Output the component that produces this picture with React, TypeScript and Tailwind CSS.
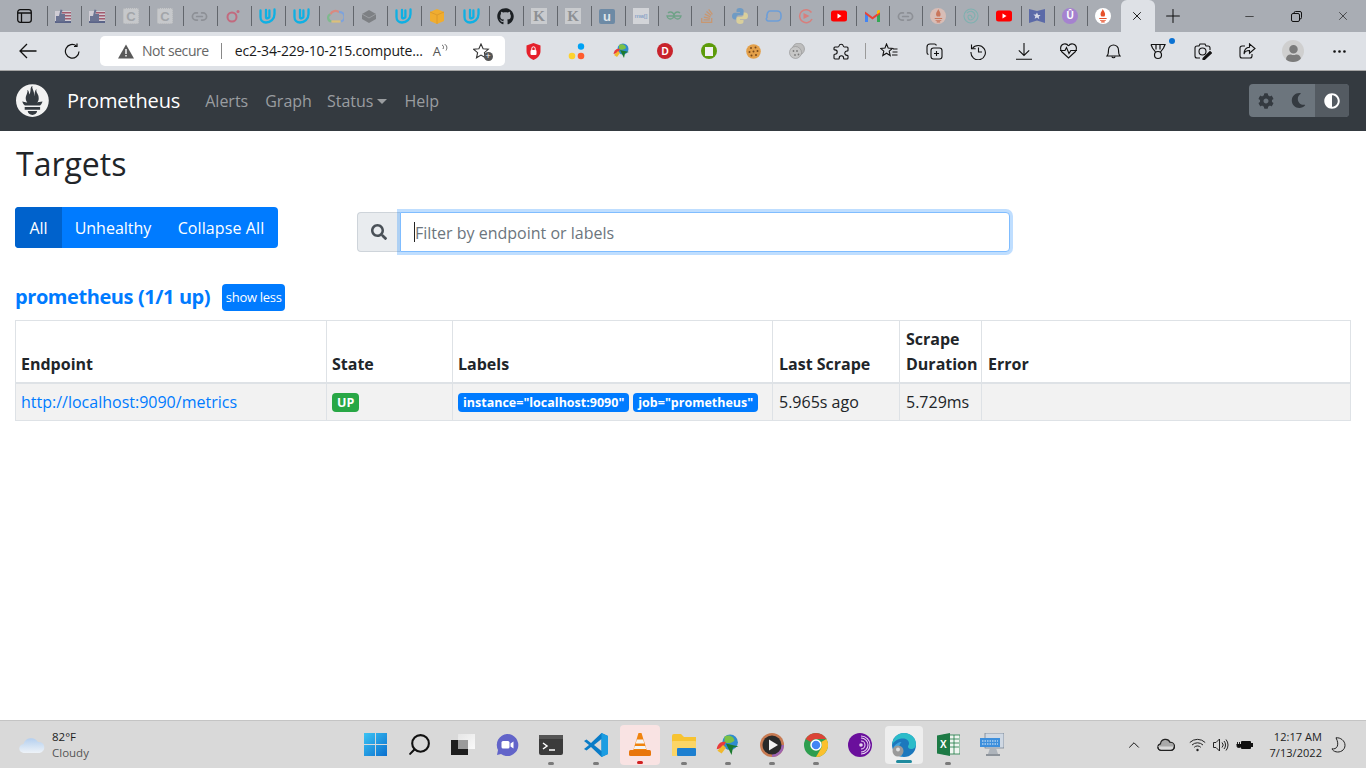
import React from "react";
import { FaSearch, FaCog, FaMoon, FaAdjust, FaGithub, FaStackOverflow, FaUser } from "react-icons/fa";
import { X, Plus, Minus, ChevronUp, Search, Link2, MoreHorizontal } from "lucide-react";

const flame = "M56.667.667C25.372.667 0 26.036 0 57.332c0 31.295 25.372 56.666 56.667 56.666s56.666-25.371 56.666-56.666C113.333 26.036 87.961.667 56.667.667zm0 106.055c-8.904 0-16.123-5.948-16.123-13.283H72.79c0 7.334-7.219 13.283-16.123 13.283zM83.297 89.04H30.034v-9.658h53.264v9.658zm-.191-14.629H30.195c-.176-.203-.356-.403-.526-.609-5.452-6.62-6.736-10.076-7.983-13.598-.021-.116 6.611 1.355 11.314 2.413 0 0 2.42.56 5.958 1.205-3.397-3.982-5.414-9.044-5.414-14.218 0-11.359 8.712-21.285 5.569-29.308 3.059.249 6.331 6.456 6.552 16.161 3.252-4.494 4.613-12.701 4.613-17.733 0-5.21 3.433-11.262 6.867-11.469-3.061 5.045.793 9.37 4.219 20.099 1.285 4.03 1.121 10.812 2.113 15.113.329-8.933 1.865-21.967 7.532-26.467-2.5 5.667.37 12.758 2.333 16.167 3.167 5.5 5.087 9.667 5.087 17.548 0 5.284-1.951 10.259-5.242 14.148 3.742-.702 6.326-1.335 6.326-1.335l12.152-2.371c.001-.001-1.765 7.261-8.558 14.254z";

const PromLogo = ({ size, color }: { size: number; color: string }) => (
  <svg width={size} height={size} viewBox="0 0 114 114"><path d={flame} fill={color} /></svg>
);

const Udacity = () => (
  <svg width="17" height="16" viewBox="0 0 17 16" fill="none" stroke="#0fb0e3" strokeWidth="2.300" strokeLinecap="round">
    <path d="M1.500 2.500v6.500c0 3.200 2.200 5.500 5.500 5.500 4.500 0 8.500-3.500 8.500-8.500V1.500" />
    <path d="M7 2v7.500c0 1.200 2.800 1 3.400-.5V2.500" />
  </svg>
);
const Flag = () => (
  <svg width="16" height="14" viewBox="0 0 16 14">
    <rect x="0" y="2" width="16" height="12" fill="#cfccd4" />
    <rect x="7" y="3" width="9" height="1.500" fill="#a25b6e" />
    <rect x="7" y="6" width="9" height="1.500" fill="#a25b6e" />
    <rect x="7" y="9" width="9" height="1.500" fill="#a25b6e" />
    <rect x="0" y="12" width="16" height="2" fill="#5b6488" />
    <path d="M1 7h3l1.500-6.500 2 .5-1 4h3.500v7.500H1z" fill="#6b7392" />
  </svg>
);
const CBox = () => (
  <div className="w-[16px] h-[16px] rounded-[2px] bg-[#c6c8cb] border border-dotted border-[#b3b5b8] flex items-center justify-center text-[13px] font-bold text-[#a2a5a9] leading-none" style={{ fontFamily: "Liberation Sans" }}>C</div>
);
const KBox = () => (
  <div className="w-[16px] h-[16px] bg-[#c9cbce] flex items-center justify-center text-[15px] font-bold text-[#8d9094] leading-none" style={{ fontFamily: "Liberation Serif" }}>K</div>
);
const LinkF = () => <Link2 size={17} color="#8d9096" strokeWidth={2.4} />;
const Yt = ({ w = 16 }: { w?: number }) => (
  <svg width={w} height="12" viewBox="0 0 16 12">
    <rect width="16" height="11" y=".5" rx="2.500" fill="#f00" />
    <path d="M6.500 3.500v5l4-2.500z" fill="#fff" />
  </svg>
);

const favicons: React.ReactNode[] = [
  <Flag />, <Flag />, <CBox />, <CBox />, <LinkF />,
  <svg width="16" height="16" viewBox="0 0 16 16" fill="none"><circle cx="7" cy="9" r="4.500" stroke="#c26a7e" strokeWidth="2" /><circle cx="13" cy="3.500" r="1.500" fill="#c26a7e" /></svg>,
  <Udacity />, <Udacity />,
  <svg width="17" height="14" viewBox="0 0 17 14" fill="none" strokeWidth="2.200"><path d="M4.500 12.500a3.800 3.800 0 0 1-1-7.300" stroke="#7fb98e" /><path d="M3.500 5.200A5.500 5.500 0 0 1 12 3.200" stroke="#d98a80" /><path d="M12 3.200a4.500 4.500 0 0 1 1.500 9.300" stroke="#7ea3dc" /><path d="M4.500 12.500h9" stroke="#dcc07a" /></svg>,
  <svg width="16" height="14" viewBox="0 0 16 14"><path d="M1 5l7-4 7 4v5l-7 4-7-4z" fill="#7d8084" /><path d="M1 5l7 4 7-4" stroke="#9b9ea2" fill="none" /></svg>,
  <Udacity />,
  <svg width="16" height="16" viewBox="0 0 16 16"><path d="M1 4l7-3 7 3v9l-7 3-7-3z" fill="#f0ad2f" /><path d="M1 4l7 3 7-3M8 7v9" stroke="#d8962a" fill="none" strokeWidth=".8" /></svg>,
  <Udacity />,
  <FaGithub size={17} color="#1b1f23" />,
  <KBox />, <KBox />,
  <div className="w-[16px] h-[15px] rounded-[2px] bg-[#6d8aa5] flex items-center justify-center text-[13px] font-bold text-[#dfe3e8] leading-none" style={{ fontFamily: "Liberation Sans" }}>u</div>,
  <div className="w-[16px] h-[16px] bg-[#d2d4d8] flex items-center justify-center text-[6px] text-[#6d8fc0] leading-none whitespace-nowrap" style={{ fontFamily: "Liberation Sans" }}>mw[]</div>,
  <svg width="16" height="10" viewBox="0 0 16 10" fill="none" stroke="#6fa287" strokeWidth="1.300"><path d="M8 5h7a3.500 3.500 0 1 1-1-3M8 5H1a3.500 3.500 0 1 0 1-3" /></svg>,
  <span className="opacity-50 flex"><FaStackOverflow size={16} color="#e8822f" /></span>,
  <svg width="16" height="16" viewBox="0 0 16 16"><path d="M8 0C5 0 4.500 1 4.500 2.500V4H8v.7H3C1 4.700 0 6 0 8s1 3.500 3 3.500h1.300V9.500c0-1.200 1-2.300 2.300-2.300h3c1.200 0 2-1 2-2V2.500C11.500 1 10 0 8 0z" fill="#6f9bc4" /><path d="M8 16c3 0 3.500-1 3.500-2.500V12H8v-.7h5c2 0 3-1.300 3-3.300s-1-3.500-3-3.500h-1.300v2c0 1.200-1 2.300-2.300 2.300h-3c-1.200 0-2 1-2 2v2.700C4.500 15 6 16 8 16z" fill="#d9cf9c" /></svg>,
  <svg width="17" height="14" viewBox="0 0 17 14" fill="none" stroke="#6d9ed8" strokeWidth="1.600"><path d="M5 2h7a4 4 0 0 1 4 4v2a4 4 0 0 1-4 4H3a2 2 0 0 1-1-3.500C1.500 5 3 2 5 2z" /></svg>,
  <svg width="16" height="16" viewBox="0 0 16 16" fill="none" stroke="#d87f7c" strokeWidth="1.500"><path d="M13.500 4.500A6.500 6.500 0 1 0 14 11" /><path d="M5.500 5l6 3-6 3z" fill="#d87f7c" stroke="none" /></svg>,
  <Yt />,
  <svg width="15" height="12" viewBox="0 0 15 12"><path d="M0 2.500V12h3V4.500z" fill="#4285f4" /><path d="M15 2.500V12h-3V4.500z" fill="#34a853" /><path d="M0 1.500L7.500 7 15 1.500V4L7.500 9.500 0 4z" fill="#ea4335" /><path d="M12 4.500L15 2.300V1c0-1-1.200-1.300-2-.7L12 1z" fill="#fbbc04" /></svg>,
  <LinkF />,
  <div className="w-[16px] h-[16px] rounded-full bg-[#d8bdb6] flex items-center justify-center"><svg width="11" height="14" viewBox="20 6 74 100"><path d="M56 6c2 10 10 16 14 28 3 10 2 18-3 26H46c-6-8-8-16-5-26 3-8 9-14 15-28z M30 70h53v7H30z M36 84h41v6H36z M44 94h25v8H44z" fill="#c9765c" /></svg></div>,
  <svg width="16" height="16" viewBox="0 0 16 16" fill="none" stroke="#7eb1b0" strokeWidth="1.100"><circle cx="8" cy="8" r="7" /><path d="M4 5c3-3 7-2 8 2 0 3-3 5-5 5-2-1-3-4-1-5 2 0 3 1 3 3" /></svg>,
  <Yt />,
  <svg width="16" height="16" viewBox="0 0 16 16"><path d="M0 1l8 2 8-2v14l-8-2.500L0 15z" fill="#5b6aa8" /><path d="M8 4.500l1.100 2.400 2.500.2-1.900 1.700.6 2.500L8 9.500l-2.300 1.300.6-2.500-1.900-1.700 2.500-.2z" fill="#d6d9e6" /></svg>,
  <div className="w-[16px] h-[16px] rounded-full bg-[#a582cf] flex items-center justify-center text-[10px] font-bold text-white leading-none" style={{ fontFamily: "Liberation Sans" }}>Û</div>,
  <div className="w-[16px] h-[16px] rounded-full bg-white flex items-center justify-center"><svg width="12" height="14" viewBox="20 6 74 100"><path d="M56 6c2 10 10 16 14 28 3 10 2 18-3 26H46c-6-8-8-16-5-26 3-8 9-14 15-28z M30 70h53v7H30z M36 84h41v6H36z M44 94h25v8H44z" fill="#e6522c" /></svg></div>,
];

const Tab = ({ children, wide }: { children: React.ReactNode; wide: boolean }) => (
  <div className={`${wide ? "w-[34px] pr-[3px]" : "w-[33px] pr-[2px]"} h-[20px] shrink-0 border-l border-[#62666c] flex items-center justify-center`}>{children}</div>
);

const Slot = ({ children, w = "w-[44.8px]" }: { children: React.ReactNode; w?: string }) => (
  <div className={`${w} shrink-0 flex items-center justify-center`}>{children}</div>
);

const TabBar = () => (
  <div className="h-[32px] bg-[#a9adb4] flex items-center shrink-0">
    <div className="w-[47px] flex justify-center pl-[1px]">
      <svg width="15" height="14" viewBox="0 0 15 14" fill="none" stroke="#111" strokeWidth="1.300"><rect x=".7" y=".7" width="13.600" height="12.600" rx="2.500" /><path d="M1 4h13M4.500 4v9" /></svg>
    </div>
    {favicons.map((f, i) => <Tab key={i} wide={i < 17}>{f}</Tab>)}
    <div className="w-[34px] h-[32px] bg-[#dee1e6] rounded-t-[6px] flex items-center justify-center pr-[3px] ml-[1px]">
      <X size={14} color="#111" strokeWidth={1.600} />
    </div>
    <div className="w-[36px] flex justify-center"><Plus size={22} color="#111" strokeWidth={1.100} /></div>
    <div className="flex-1" />
    <div className="w-[47px] flex justify-center"><Minus size={13} color="#111" strokeWidth={1.200} /></div>
    <div className="w-[47px] flex justify-center">
      <svg width="11" height="11" viewBox="0 0 11 11" fill="none" stroke="#111"><rect x=".5" y="2.500" width="8" height="8" rx="1.500" /><path d="M3 2.500V2a1.500 1.500 0 0 1 1.500-1.500H9A1.500 1.500 0 0 1 10.500 2v4.500A1.500 1.500 0 0 1 9 8h-.500" /></svg>
    </div>
    <div className="w-[46px] flex justify-center"><X size={14} color="#111" strokeWidth={1.100} /></div>
  </div>
);

const stroke = { fill: "none", stroke: "#111", strokeWidth: 1.100 };

const Toolbar = () => (
  <div className="h-[38px] bg-[#dee1e6] flex items-center shrink-0">
    <div className="w-[56px] flex justify-center">
      <svg width="18" height="16" viewBox="0 0 18 16" {...stroke} strokeWidth={1.300}><path d="M17.500 8H1M8 1L1 8l7 7" /></svg>
    </div>
    <div className="w-[32px] flex justify-center">
      <svg width="17" height="17" viewBox="0 0 17 17" {...stroke} strokeWidth={1.200}><path d="M15 8.500A6.800 6.800 0 1 1 12.500 3" /><path d="M13 .5V3.500H10" /></svg>
    </div>
    <div className="w-[405px] h-[30px] ml-[12px] bg-white rounded-[5px] flex items-center pl-[18px] text-[14px] shrink-0">
      <svg width="16" height="15" viewBox="0 0 16 15" className="shrink-0"><path d="M8 .5L16 14.500H0z" fill="#595959" /><rect x="7.300" y="5" width="1.400" height="5" fill="#fff" /><rect x="7.300" y="11" width="1.400" height="1.500" fill="#fff" /></svg>
      <span className="ml-[8px] text-[#666] tracking-[-0.42px] whitespace-nowrap -mt-[1px]">Not secure</span>
      <span className="w-px h-[16px] bg-[#888] ml-[12px]" />
      <span className="ml-[13px] text-[#1a1a1a] tracking-[-0.2px] whitespace-nowrap -mt-[1px]">ec2-34-229-10-215.compute...</span>
      <span className="ml-[10px] w-[18px] flex items-center text-[#555] text-[13px] leading-none shrink-0">
        A
        <svg width="7" height="10" viewBox="0 0 7 10" fill="none" stroke="#555" strokeWidth=".9" className="mb-[5px]"><path d="M1 1c1.500.5 2 2 1 4M3.500 0c2.500 1.500 3 4 1.500 6.500" /></svg>
      </span>
      <span className="relative ml-[22px] flex">
        <svg width="17" height="16" viewBox="0 0 17 16" {...stroke} stroke="#333"><path d="M8 1l2.100 4.800 5.200.5-3.900 3.400 1.100 5.100L8 12.100 3.500 14.800l1.100-5.100L.7 6.300l5.200-.5z" /></svg>
        <span className="absolute right-[-3px] bottom-[-2px] w-[9px] h-[9px] rounded-full bg-[#555] text-white text-[9px] leading-[8px] text-center">+</span>
      </span>
    </div>
    <div className="w-[6px]" />
    <Slot w="w-[44px]">
      <svg width="15" height="17" viewBox="0 0 15 17"><path d="M7.500 0l7 2.500V8c0 4-3 7.500-7 9-4-1.500-7-5-7-9V2.500z" fill="#e5202b" /><rect x="4.500" y="7" width="6" height="5" rx="1" fill="#fff" /><path d="M5.800 7V5.500a1.700 1.700 0 0 1 3.400 0V7" fill="none" stroke="#fff" /></svg>
    </Slot>
    <Slot w="w-[44px]">
      <svg width="18" height="17" viewBox="0 0 18 17"><circle cx="13" cy="3.500" r="3.200" fill="#00a2f4" /><circle cx="4" cy="13" r="3.300" fill="#fdd22e" /><circle cx="13" cy="13" r="3.300" fill="#ff5b2e" /></svg>
    </Slot>
    <Slot w="w-[44px]">
      <svg width="17" height="16" viewBox="0 0 17 16"><circle cx="10" cy="6" r="5.500" fill="#2f8ccf" /><path d="M6 2c3-2 7 0 7 3-2 2-5 2-7 1z" fill="#7cc144" /><path d="M.5 11C1 7 4 5 7 6L5 10z" fill="#e83b3b" /><path d="M1 12l4-4 2 2-3 4z" fill="#f1b92d" /><path d="M7 7l9 2-4 1-1 5z" fill="#1c7a2e" /></svg>
    </Slot>
    <Slot w="w-[44px]">
      <div className="w-[16px] h-[16px] rounded-full bg-[#c8232c] text-white text-[10px] font-bold flex items-center justify-center" style={{ fontFamily: "Liberation Sans" }}>D</div>
    </Slot>
    <Slot w="w-[44px]">
      <div className="w-[16px] h-[16px] rounded-full bg-[#5d9b0a] flex items-center justify-center"><div className="w-[8px] h-[9px] bg-[#f0f0f0]" /></div>
    </Slot>
    <Slot w="w-[44px]">
      <svg width="15" height="15" viewBox="0 0 15 15"><circle cx="7.500" cy="7.500" r="7.300" fill="#e3a04a" /><g fill="#7a4a1c"><circle cx="5" cy="4" r="1" /><circle cx="9.500" cy="3.500" r="1" /><circle cx="3.500" cy="8" r="1" /><circle cx="7.500" cy="7.500" r="1" /><circle cx="11.500" cy="7" r="1" /><circle cx="5.500" cy="11.500" r="1" /><circle cx="10" cy="11" r="1" /></g></svg>
    </Slot>
    <Slot w="w-[44px]">
      <svg width="16" height="16" viewBox="0 0 16 16"><circle cx="9.500" cy="6" r="6" fill="#bdbdbd" stroke="#8f8f8f" strokeWidth=".6" /><circle cx="6.500" cy="9.500" r="6" fill="#c6c6c6" stroke="#8f8f8f" strokeWidth=".6" /><g fill="#7c7c7c"><circle cx="4.500" cy="8" r=".9" /><circle cx="8" cy="8" r=".9" /><circle cx="6" cy="12" r=".9" /><circle cx="9.500" cy="11.500" r=".9" /></g></svg>
    </Slot>
    <Slot w="w-[44px]">
      <svg width="16" height="17" viewBox="0 0 16 17" {...stroke}><path d="M6 3a2.200 2.200 0 0 1 4.300 0c.1.700.6 1 1.200 1h2.500a1 1 0 0 1 1 1v2.300c0 .6-.5.8-1 .7a2.200 2.200 0 1 0 0 4.400c.5-.1 1 .1 1 .7V15a1 1 0 0 1-1 1h-2.700c-.6 0-.8-.5-.7-1a2.200 2.200 0 1 0-4.400 0c.1.500-.1 1-.7 1H2a1 1 0 0 1-1-1v-3c0-.6.500-.8 1-.7a2.200 2.200 0 1 0 0-4.400c-.5.100-1-.1-1-.7V5a1 1 0 0 1 1-1h3c.5 0 .9-.4 1-1z" /></svg>
    </Slot>
    <div className="w-px h-[16px] bg-[#9a9a9a] ml-[2px] mr-[1px]" />
    <Slot>
      <svg width="18" height="17" viewBox="0 0 18 17" {...stroke}><path d="M6.500 1l1.700 4 4.300.4-3.300 2.800 1 4.300-3.700-2.300L2.800 12.500l1-4.300L.6 5.400 5 5zM13 6h4.500M12.500 9h5M12 12h5.500" /></svg>
    </Slot>
    <Slot>
      <svg width="17" height="17" viewBox="0 0 17 17" {...stroke}><path d="M2.500 11.500A2 2 0 0 1 1 9.500V4a3 3 0 0 1 3-3h4.500a2 2 0 0 1 1.900 1.500" /><rect x="5" y="5" width="11" height="11" rx="2.500" /><path d="M10.500 8v5M8 10.500h5" /></svg>
    </Slot>
    <Slot>
      <svg width="17" height="17" viewBox="0 0 17 17" {...stroke}><path d="M2.300 5.500A7.200 7.200 0 1 1 1 9" /><path d="M1.500 1.500v4.200h4.200" /><path d="M8.500 4.500v4.500h3.500" /></svg>
    </Slot>
    <Slot>
      <svg width="16" height="17" viewBox="0 0 16 17" {...stroke}><path d="M8 0v12.500M2.800 7.300L8 12.500l5.200-5.200M0 16.300h16" /></svg>
    </Slot>
    <Slot>
      <svg width="17" height="16" viewBox="0 0 17 16" {...stroke}><path d="M8.500 3C6.500-.5 .8.500.6 5c-.1 1.500.4 2.500 1 3.500M8.500 3c2-3.500 7.700-2.500 7.900 2 .1 1.500-.4 2.500-1 3.500M1.500 8.500L8.500 15l7-6.500" /><path d="M0 7.500h5l1.500-3 2.500 6 1.800-3H17" /></svg>
    </Slot>
    <Slot>
      <svg width="15" height="17" viewBox="0 0 15 17" {...stroke}><path d="M1 13c1.500-1.500 1.500-3 1.500-6a5 5 0 0 1 10 0c0 3 0 4.500 1.500 6z" /><path d="M5.800 13.500a1.800 1.800 0 0 0 3.400 0" /></svg>
    </Slot>
    <Slot>
      <span className="relative flex">
        <svg width="16" height="17" viewBox="0 0 16 17" {...stroke} strokeWidth={1.200}><path d="M1 1.500h14L13.500 5l-3 4M1 1.500L2.500 5l3 4M6 1.500v5M10 1.500v5" /><circle cx="8" cy="12" r="3.500" /></svg>
        <span className="absolute top-[-5px] right-[-9px] w-[6px] h-[6px] rounded-full bg-[#0b72d3]" />
      </span>
    </Slot>
    <Slot>
      <svg width="18" height="17" viewBox="0 0 18 17" {...stroke}><path d="M6 15H3a2 2 0 0 1-2-2V5a2 2 0 0 1 2-2h2l1-2h5l1 2h2a2 2 0 0 1 2 2v2" /><circle cx="8.500" cy="8.500" r="3.500" /><path d="M9 15.500l7-7 1.500 1.500-7 6.500H9z" fill="#111" /></svg>
    </Slot>
    <Slot>
      <svg width="17" height="16" viewBox="0 0 17 16" {...stroke}><path d="M6 3H3a2 2 0 0 0-2 2v8a2 2 0 0 0 2 2h8a2 2 0 0 0 2-2v-2" /><path d="M10.500 .8L16 5.500l-5.500 4.700V7.500C7.500 7.500 5.500 9 5 11c0-4 2-6.700 5.500-6.700z" /></svg>
    </Slot>
    <Slot w="w-[46px]">
      <div className="w-[22px] h-[22px] rounded-full bg-[#cfcfcf] overflow-hidden flex items-end justify-center"><FaUser size={17} color="#7b7b7b" /></div>
    </Slot>
    <Slot w="w-[46px]"><MoreHorizontal size={17} color="#111" strokeWidth={1.800} /></Slot>
  </div>
);

const NavBar = () => (
  <div className="h-[61px] bg-[#343a40] border-t border-[#a4a4a4] flex items-center pl-[16px] pr-[17px] shrink-0">
    <span className="flex -mt-[1px]"><PromLogo size={33} color="#f2f2f2" /></span>
    <span className="ml-[18px] text-[20px] text-white tracking-[-0.12px]">Prometheus</span>
    <div className="ml-[25px] flex text-[#9a9da0] gap-[17px] text-[16px] items-center">
      <span>Alerts</span>
      <span>Graph</span>
      <span className="flex items-center -ml-[2px]">Status<span className="ml-[4px] mt-[1px] border-t-[5px] border-x-[5px] border-x-transparent border-t-[#9a9da0]" /></span>
      <span>Help</span>
    </div>
    <div className="flex-1" />
    <div className="flex h-[33px] -mt-[1px] rounded-[4px] overflow-hidden bg-[#6c757d]">
      <div className="w-[33px] flex items-center justify-center"><FaCog size={16} color="#343a40" /></div>
      <div className="w-[33px] flex items-center justify-center"><FaMoon size={15} color="#343a40" /></div>
      <div className="w-[34px] bg-[#545b62] flex items-center justify-center"><FaAdjust size={16} color="#fff" /></div>
    </div>
  </div>
);

const Th = ({ w, pl, children }: { w?: string; pl?: string; children: React.ReactNode }) => (
  <th className={`${w ?? ""} ${pl ?? "pl-[5px]"} border border-[#dee2e6] border-b-2 pr-[5px] pt-[6px] pb-[5px] text-left align-bottom font-bold text-[16px] leading-[25px]`}>{children}</th>
);
const Td = ({ pl, children }: { pl?: string; children?: React.ReactNode }) => (
  <td className={`${pl ?? "pl-[5px]"} border border-[#dee2e6] pr-[5px] py-[5px] align-top text-[16px] leading-[26px]`}>{children}</td>
);
const Badge = ({ children, bg }: { children: React.ReactNode; bg: string }) => (
  <span className={`${bg} inline-block rounded-[4px] text-white font-bold text-[12.5px] leading-[13px] px-[5px] py-[3px] whitespace-nowrap`}>{children}</span>
);

const Main = () => (
  <div className="flex-1 bg-white px-[15px] text-[#212529] overflow-hidden">
    <h1 className="text-[32px] leading-[38px] font-medium mt-[14px] ml-[1px]">Targets</h1>
    <div className="flex items-start mt-[24px]">
      <div className="flex h-[41px] w-[263px] rounded-[4px] overflow-hidden bg-[#007bff] text-white text-[16px] items-stretch shrink-0">
        <div className="w-[47px] bg-[#0062cc] flex items-center justify-center">All</div>
        <div className="w-[102px] flex items-center justify-center">Unhealthy</div>
        <div className="w-[114px] flex items-center justify-center tracking-[0.1px]">Collapse All</div>
      </div>
      <div className="flex h-[40px] w-[653px] ml-[79px] mt-[5px] shrink-0">
        <div className="w-[43px] bg-[#e9ecef] border border-[#ced4da] border-r-0 rounded-l-[4px] flex items-center justify-center">
          <FaSearch size={16} color="#495057" />
        </div>
        <div className="flex-1 border border-[#80bdff] rounded-r-[4px] shadow-[0_0_0_3px_rgba(0,123,255,0.25)] flex items-center pl-[13px] text-[16px] text-[#6c757d] bg-white">
          <span className="w-px h-[20px] bg-[#222]" />
          <span className="pt-[2px]">Filter by endpoint or labels</span>
        </div>
      </div>
    </div>
    <div className="flex items-start mt-[32px] h-[27px]">
      <span className="text-[20px] leading-[25px] font-bold text-[#007bff] tracking-[-0.42px]">prometheus (1/1 up)</span>
      <span className="ml-[12px] h-[27px] w-[63px] rounded-[4px] bg-[#007bff] text-white text-[13px] tracking-[-0.3px] flex items-center justify-center pt-[1px]">show less</span>
    </div>
    <table className="mt-[9px] w-[1336px] border-collapse table-fixed">
      <thead>
        <tr>
          <Th w="w-[311px]">Endpoint</Th>
          <Th w="w-[126px]">State</Th>
          <Th w="w-[320px]">Labels</Th>
          <Th w="w-[127px]" pl="pl-[6px]">Last Scrape</Th>
          <Th w="w-[82px]" pl="pl-[6px]">Scrape Duration</Th>
          <Th pl="pl-[6px]">Error</Th>
        </tr>
      </thead>
      <tbody>
        <tr className="bg-[#f2f2f2]">
          <Td><span className="text-[#007bff]">http://localhost:9090/metrics</span></Td>
          <Td><span className="flex mt-[4px]"><Badge bg="bg-[#28a745]">UP</Badge></span></Td>
          <Td>
            <span className="flex gap-[4px] mt-[4px]">
              <Badge bg="bg-[#007bff]">instance="localhost:9090"</Badge>
              <Badge bg="bg-[#007bff]">job="prometheus"</Badge>
            </span>
          </Td>
          <Td pl="pl-[6px]">5.965s ago</Td>
          <Td pl="pl-[6px]">5.729ms</Td>
          <Td />
        </tr>
      </tbody>
    </table>
  </div>
);

const TaskItem = ({ children, dot, hi, bar }: { children: React.ReactNode; dot?: boolean; hi?: string; bar?: string }) => (
  <div className="w-[44.1px] h-[48px] shrink-0 flex items-center justify-center">
    <div className={`relative rounded-[4px] flex items-center justify-center ${hi ?? "w-[40px] h-[40px]"}`}>
      {children}
      {dot && <span className="absolute bottom-[0px] left-1/2 -translate-x-1/2 w-[6px] h-[3px] rounded-full bg-[#7a7a7a]" />}
      {bar && <span className={`absolute bottom-[1px] left-1/2 -translate-x-1/2 h-[3px] rounded-full ${bar}`} />}
    </div>
  </div>
);

const TaskBar = () => (
  <div className="h-[48px] bg-[#d9d9d9] border-t border-[#c4c4c4] flex items-center shrink-0">
    <div className="w-[353px] flex items-center pl-[19px] shrink-0">
      <svg width="26" height="18" viewBox="0 0 26 18"><defs><linearGradient id="cl" x1="0" y1="0" x2="0" y2="1"><stop offset="0" stopColor="#b4cfef" /><stop offset="1" stopColor="#eef3f8" /></linearGradient></defs><path d="M5 17a4.500 4.500 0 0 1-.5-9A8 8 0 0 1 19 6a5.500 5.500 0 0 1 1.500 11z" fill="url(#cl)" /></svg>
      <div className="ml-[7px] flex flex-col text-[11.5px] leading-[16px]">
        <span className="text-[#222]">82°F</span>
        <span className="text-[#555]">Cloudy</span>
      </div>
    </div>
    <TaskItem>
      <svg width="23" height="23" viewBox="0 0 24 24"><defs><linearGradient id="w1" x1="0" y1="0" x2="1" y2="1"><stop offset="0" stopColor="#3cc4f4" /><stop offset="1" stopColor="#0a6fce" /></linearGradient></defs><path d="M0 0h11.500v11.500H0zM12.500 0H24v11.500H12.500zM0 12.500h11.500V24H0zM12.500 12.500H24V24H12.500z" fill="url(#w1)" /></svg>
    </TaskItem>
    <TaskItem><Search size={25} color="#111" strokeWidth={2} className="-scale-x-100" /></TaskItem>
    <TaskItem>
      <svg width="25" height="22" viewBox="0 0 25 22"><defs><linearGradient id="tv" x1="0" y1="0" x2="1" y2="1"><stop offset="0" stopColor="#e6e6e6" /><stop offset="1" stopColor="#fafafa" /></linearGradient></defs><rect x="7" y="0" width="17" height="15" fill="url(#tv)" /><rect y="6" width="17" height="15" fill="#1d1d1d" /><rect x="7" y="6" width="10" height="9" fill="#9a9a9a" /></svg>
    </TaskItem>
    <TaskItem>
      <svg width="24" height="24" viewBox="0 0 24 24"><path d="M12 1a11 11 0 1 1-6 20l-4 1 1-5A11 11 0 0 1 12 1z" fill="#6264c9" /><rect x="6.500" y="8" width="8" height="7.500" rx="1.500" fill="#fff" /><path d="M15.500 10.500l3-2v7l-3-2z" fill="#fff" /></svg>
    </TaskItem>
    <TaskItem dot>
      <svg width="24" height="20" viewBox="0 0 24 20"><rect width="24" height="20" rx="2" fill="#3b3b3b" /><rect width="24" height="4" fill="#555" /><path d="M4 8l4 3-4 3" stroke="#fff" fill="none" strokeWidth="1.500" /><path d="M10 15h6" stroke="#fff" strokeWidth="1.500" /></svg>
    </TaskItem>
    <TaskItem dot>
      <svg width="24" height="24" viewBox="0 0 24 24"><path d="M17.500 0L24 3v18l-6.500 3L7 14l-4.500 3.500L0 16l5-4-5-4 2.500-1.500L7 10z" fill="#0a7cc7" /><path d="M17.500 6v12L10 12z" fill="#d9d9d9" /><path d="M17.500 0L24 3v18l-6.500 3z" fill="#1b9de2" /></svg>
    </TaskItem>
    <TaskItem hi="w-[40px] h-[40px] bg-[#f9e3e3]" bar="w-[6px] bg-[#d12020]">
      <svg width="22" height="24" viewBox="0 0 22 24"><path d="M9.500 0h3L18 18H4z" fill="#f0830e" /><path d="M7.800 6.500h6.400l1.100 4H6.700zM5.700 13h10.600l.9 3H4.800z" fill="#f4f4f4" /><rect y="17" width="22" height="6" rx="1.500" fill="#e8760c" /></svg>
    </TaskItem>
    <TaskItem dot>
      <svg width="24" height="22" viewBox="0 0 24 22"><path d="M0 2a2 2 0 0 1 2-2h7l3 3h12v17a2 2 0 0 1-2 2H2a2 2 0 0 1-2-2z" fill="#f7c331" /><rect y="7" width="24" height="15" rx="1" fill="#fbd566" /><rect x="5" y="14" width="19" height="8" rx="1" fill="#1c7fd0" /></svg>
    </TaskItem>
    <TaskItem dot>
      <svg width="24" height="24" viewBox="0 0 17 16"><circle cx="10" cy="6" r="5.500" fill="#2f8ccf" /><path d="M6 2c3-2 7 0 7 3-2 2-5 2-7 1z" fill="#7cc144" /><path d="M.5 11C1 7 4 5 7 6L5 10z" fill="#e83b3b" /><path d="M1 12l4-4 2 2-3 4z" fill="#f1b92d" /><path d="M7 7l9 2-4 1-1 5z" fill="#1c7a2e" /></svg>
    </TaskItem>
    <TaskItem dot>
      <svg width="24" height="24" viewBox="0 0 24 24"><circle cx="12" cy="12" r="12" fill="#c77a52" /><path d="M12 24a12 12 0 0 0 12-12h-3a9 9 0 0 1-9 9z" fill="#9d64b0" /><circle cx="12" cy="12" r="9.500" fill="#2a2a2a" /><path d="M9 6.500l9 5.500-9 5.500z" fill="#f2f2f2" /></svg>
    </TaskItem>
    <TaskItem dot>
      <svg width="24" height="24" viewBox="0 0 24 24"><circle cx="12" cy="12" r="12" fill="#2e9e4f" /><path d="M12 0a12 12 0 0 1 10.400 6H12a6 6 0 0 0-5.200 3L1.600 6A12 12 0 0 1 12 0z" fill="#db4437" /><path d="M22.400 6A12 12 0 0 1 12 24l5.200-9A6 6 0 0 0 17.200 9z" fill="#fbc02d" /><circle cx="12" cy="12" r="5" fill="#4285f4" stroke="#fff" strokeWidth="1.500" /></svg>
    </TaskItem>
    <TaskItem>
      <svg width="24" height="24" viewBox="0 0 24 24"><circle cx="12" cy="12" r="12" fill="#6a0f9c" /><path d="M13 5a7 7 0 0 1 0 14M13 8a4 4 0 0 1 0 8M13 3a9 9 0 0 1 0 18" fill="none" stroke="#e6d4f0" strokeWidth="1.100" /><circle cx="13" cy="12" r="1.800" fill="#e6d4f0" /></svg>
    </TaskItem>
    <TaskItem hi="w-[38px] h-[38px] bg-[#eeeeee]" bar="w-[16px] bg-[#1f8a9e]">
      <svg width="24" height="24" viewBox="0 0 24 24"><circle cx="12" cy="12" r="12" fill="#1c78bd" /><path d="M0 12C1 4 6 0 12 0c7 0 12 5 12 11 0 3-2 5-5 5-2 0-3-1-3-2.500 0-1 1-1.500 1-3C17 7 14 5.500 11 5.500 6 5.500 2 8 0 12z" fill="#2cbcc9" /><path d="M11 24c-5-1-9-5-9.500-10 2-3 5-5 8-5-2 2-3 5-2 8 .5 3 2 5.500 3.500 7z" fill="#3aa3e0" /><circle cx="6" cy="18" r="5.500" fill="#9a9a9a" /><circle cx="6" cy="16.500" r="2" fill="#e0e0e0" /></svg>
    </TaskItem>
    <TaskItem dot>
      <svg width="23" height="23" viewBox="0 0 23 23"><rect x="7" y="2" width="16" height="19" fill="#f0f5f1" stroke="#1d7a45" strokeWidth=".8" /><path d="M13 6h9M13 10h9M13 14h9M17 2v19" stroke="#1d7a45" strokeWidth=".8" /><path d="M0 2.500L13 0v23L0 20.500z" fill="#1d7a45" /><text x="3" y="15" fontSize="10" fontWeight="700" fill="#fff" fontFamily="Liberation Sans">X</text></svg>
    </TaskItem>
    <TaskItem>
      <svg width="24" height="24" viewBox="0 0 24 24"><rect x="5" y="0" width="19" height="15" fill="#cfd8e3" stroke="#5a6a7a" strokeWidth=".6" /><rect x="0" y="5" width="20" height="9" fill="#3d8fdc" /><path d="M2 8h16M2 11h16" stroke="#e6f0fa" strokeDasharray="1.500 1" /><path d="M10 15h6l2 6H8z" fill="#aeb4bb" /><rect x="6" y="21" width="14" height="2" fill="#8d939a" /></svg>
    </TaskItem>
    <div className="flex-1" />
    <div className="flex items-center text-[#222] pr-[16px]">
      <Slot w="w-[32px]"><ChevronUp size={18} color="#111" strokeWidth={1.300} /></Slot>
      <Slot w="w-[32px]">
        <svg width="18" height="13" viewBox="0 0 18 13"><path d="M4 12.300a3.300 3.300 0 0 1-.5-6.500 5 5 0 0 1 9.500-1.500 4 4 0 0 1 1 8z" fill="#a9a9a9" stroke="#222" strokeWidth="1.200" /><path d="M1 8.500h16v.5a3.300 3.300 0 0 1-3 3.300H4A3.300 3.300 0 0 1 1 9z" fill="#d9d9d9" /><path d="M4 12.300a3.300 3.300 0 0 1-3-3.300M17 8.500a3.500 3.500 0 0 1-3 3.800H4" fill="none" stroke="#222" strokeWidth="1.200" /></svg>
      </Slot>
      <Slot w="w-[30px]">
        <svg width="17" height="14" viewBox="0 0 17 14" fill="none" stroke="#222" strokeWidth="1"><path d="M.8 4.500a11 11 0 0 1 15.400 0M3 7a8 8 0 0 1 11 0M5.200 9.300a4.700 4.700 0 0 1 6.600 0" /><circle cx="8.500" cy="12" r="1.200" fill="#222" stroke="none" /></svg>
      </Slot>
      <Slot w="w-[23px] -ml-[3px]">
        <svg width="16" height="14" viewBox="0 0 16 14" fill="none" stroke="#222" strokeWidth="1"><path d="M.5 4.500h2.500L6.500 1v12L3 9.500H.5zM9 4.500a3.500 3.500 0 0 1 0 5M11 3a6 6 0 0 1 0 8M13 1.500a8.500 8.500 0 0 1 0 11" /></svg>
      </Slot>
      <Slot w="w-[24px]">
        <svg width="17" height="13" viewBox="0 0 17 13"><rect x="5" y="3" width="10" height="8" rx="1" fill="#111" /><rect x="15" y="5" width="2" height="4" fill="#111" /><path d="M.5 6.500h5M1.500 4v2M3.500 4v2M1 6.500h4V8a1.500 1.500 0 0 1-1.500 1.500h-1A1.500 1.500 0 0 1 1 8z" stroke="#111" fill="#111" strokeWidth=".9" /></svg>
      </Slot>
      <div className="flex flex-col items-end text-[11px] leading-[16px] w-[61px] ml-[5px] text-[#222] whitespace-nowrap tracking-[0.05px]">
        <span>12:17 AM</span>
        <span>7/13/2022</span>
      </div>
      <Slot w="w-[28px]" >
        <svg width="15" height="16" viewBox="0 0 15 16" fill="none" stroke="#222" strokeWidth="1" className="ml-[4px]"><path d="M5 .8c4.500-.5 9 3 9 7.500 0 5-5 7.500-9 6.500-2-.5-3.500-1.500-4-3 4.500 1 8-3.500 4-11z" /></svg>
      </Slot>
    </div>
  </div>
);

export default function App() {
  return (
    <div className="w-[1366px] h-[768px] flex flex-col overflow-hidden" style={{ fontFamily: '"Open Sans", sans-serif' }}>
      <TabBar />
      <Toolbar />
      <NavBar />
      <Main />
      <TaskBar />
    </div>
  );
}
